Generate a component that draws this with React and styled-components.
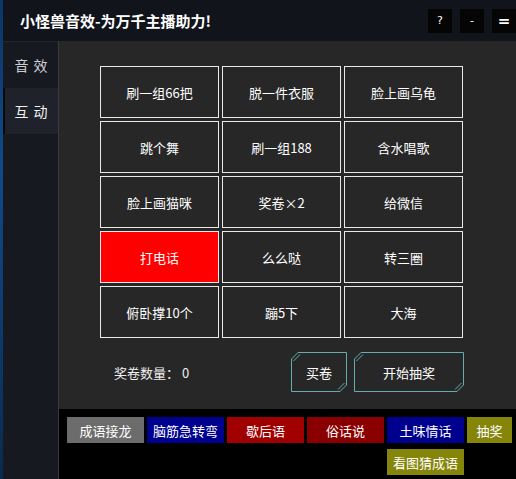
import React from 'react';
import styled, { createGlobalStyle } from 'styled-components';

const GlobalStyle = createGlobalStyle`
  html, body {
    margin: 0;
    padding: 0;
    background: #000;
  }
  body {
    font-family: "Noto Sans CJK SC", "Noto Sans", sans-serif;
  }
`;

const Frame = styled.div`
  display: flex;
  width: 516px;
  height: 479px;
  overflow: hidden;
  background: #000;
`;

const Edge = styled.div`
  width: 3px;
  flex-shrink: 0;
  background: linear-gradient(180deg, #0b3566 0%, #0f4a88 35%, #0c3a6c 70%, #0a2a4e 100%);
`;

const Body = styled.div`
  flex: 1;
  display: flex;
  flex-direction: column;
  min-width: 0;
`;

const TitleBar = styled.header`
  height: 41px;
  flex-shrink: 0;
  display: flex;
  align-items: center;
  justify-content: space-between;
  padding-left: 17px;
  background: #12141b;
`;

const Title = styled.h1`
  margin: 0;
  font-size: 15px;
  font-weight: 700;
  color: #fff;
  letter-spacing: 0;
`;

const WinButtons = styled.div`
  display: flex;
  gap: 8px;
`;

const WinButton = styled.button`
  width: 24px;
  height: 24px;
  padding: 0;
  border: none;
  background: #050505;
  color: #fff;
  font-family: "DejaVu Sans", sans-serif;
  font-size: ${(p) => (p.$big ? '15px' : '11px')};
  font-weight: ${(p) => (p.$big ? 700 : 400)};
  line-height: 24px;
`;

const Content = styled.div`
  flex: 1;
  display: flex;
  min-height: 0;
`;

const Sidebar = styled.nav`
  width: 55px;
  flex-shrink: 0;
  background: #161920;
  border-top: 1px solid #23262e;
  border-right: 1px solid #3a3b3e;
`;

const NavItem = styled.div`
  height: 46px;
  display: flex;
  align-items: center;
  justify-content: center;
  font-size: 14px;
  letter-spacing: 5px;
  padding-left: 4px;
  box-sizing: border-box;
  color: ${(p) => (p.$active ? '#f2f2f2' : '#cdd0d6')};
  background: ${(p) => (p.$active ? '#1f222a' : 'transparent')};
  border-left: 2px solid ${(p) => (p.$active ? '#05070a' : 'transparent')};
`;

const Main = styled.main`
  flex: 1;
  display: flex;
  flex-direction: column;
`;

const Panel = styled.section`
  background: #272727;
  padding: 25px 0 17px 41px;
`;

const Grid = styled.div`
  display: grid;
  grid-template-columns: repeat(3, 119px);
  grid-auto-rows: 52px;
  gap: 3px;
`;

const Cell = styled.button`
  border: 1px solid #e9e9e9;
  background: ${(p) => (p.$hot ? '#ff0000' : '#272727')};
  color: #fff;
  font-family: inherit;
  font-size: 13px;
  padding: 0;
`;

const Footer = styled.div`
  width: 364px;
  height: 40px;
  margin-top: 14px;
  display: flex;
  align-items: center;
  gap: 7px;
`;

const Count = styled.span`
  margin-left: 14px;
  margin-right: auto;
  font-size: 13px;
  color: #f0f0f0;
  white-space: pre;
`;

const FancyButton = styled.button`
  position: relative;
  width: ${(p) => p.$w}px;
  height: 40px;
  padding: 0;
  border: none;
  background: transparent;
  color: #fff;
  font-family: inherit;
  font-size: 13px;

  svg {
    position: absolute;
    inset: 0;
    pointer-events: none;
  }
`;

const Tabs = styled.div`
  flex: 1;
  background: #000;
  padding: 8px 0 0 8px;
  display: grid;
  grid-template-columns: repeat(5, 77px) 45px;
  grid-auto-rows: 26px;
  column-gap: 3px;
  row-gap: 6px;
  align-content: start;
`;

const Tab = styled.div`
  grid-column: ${(p) => p.$col || 'auto'};
  display: flex;
  align-items: center;
  justify-content: center;
  background: ${(p) => p.$bg};
  color: #fff;
  font-size: 13px;
`;

const buttons = [
  '刷一组66把', '脱一件衣服', '脸上画乌龟',
  '跳个舞', '刷一组188', '含水唱歌',
  '脸上画猫咪', '奖卷×2', '给微信',
  '打电话', '么么哒', '转三圈',
  '俯卧撑10个', '蹦5下', '大海',
];

const tabs = [
  { label: '成语接龙', bg: '#6c6c6c' },
  { label: '脑筋急转弯', bg: '#00008e' },
  { label: '歇后语', bg: '#a10000' },
  { label: '俗话说', bg: '#8a0000' },
  { label: '土味情话', bg: '#00008e' },
  { label: '抽奖', bg: '#85850a' },
  { label: '看图猜成语', bg: '#85850a', col: 5 },
];

function Chamfer({ w, h }) {
  const c = 7;
  return (
    <svg width={w} height={h} viewBox={`0 0 ${w} ${h}`}>
      <path
        d={`M${c} 0.5 H${w - 0.5} V${h - c} L${w - c} ${h - 0.5} H0.5 V${c} Z`}
        fill="none"
        stroke="#64aeac"
        strokeWidth="1"
      />
      <path d={`M2.5 ${c + 2} L${c + 2} 2.5`} stroke="#64aeac" strokeWidth="1" />
      <path d={`M${w - c - 2} ${h - 2.5} L${w - 2.5} ${h - c - 2}`} stroke="#64aeac" strokeWidth="1" />
    </svg>
  );
}

function ChamferButton({ w, children }) {
  return (
    <FancyButton $w={w}>
      <Chamfer w={w} h={40} />
      {children}
    </FancyButton>
  );
}

export default function App() {
  return (
    <>
      <GlobalStyle />
      <Frame>
        <Edge />
        <Body>
          <TitleBar>
            <Title>小怪兽音效-为万千主播助力!</Title>
            <WinButtons>
              <WinButton>?</WinButton>
              <WinButton>-</WinButton>
              <WinButton $big>=</WinButton>
            </WinButtons>
          </TitleBar>
          <Content>
            <Sidebar>
              <NavItem>音效</NavItem>
              <NavItem $active>互动</NavItem>
            </Sidebar>
            <Main>
              <Panel>
                <Grid>
                  {buttons.map((b, i) => (
                    <Cell key={`btn-${i}`} $hot={b === '打电话'}>{b}</Cell>
                  ))}
                </Grid>
                <Footer>
                  <Count>奖卷数量： 0</Count>
                  <ChamferButton w={56}>买卷</ChamferButton>
                  <ChamferButton w={110}>开始抽奖</ChamferButton>
                </Footer>
              </Panel>
              <Tabs>
                {tabs.map((t, i) => (
                  <Tab key={`tab-${i}`} $bg={t.bg} $col={t.col}>{t.label}</Tab>
                ))}
              </Tabs>
            </Main>
          </Content>
        </Body>
      </Frame>
    </>
  );
}
